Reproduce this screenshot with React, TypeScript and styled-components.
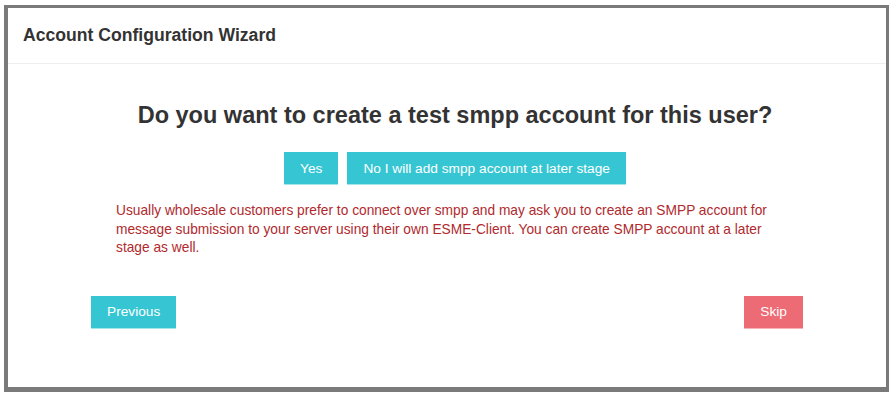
import React from "react";
import styled, { createGlobalStyle } from "styled-components";

const Global = createGlobalStyle`
  html, body { margin: 0; padding: 0; background: #ffffff; }
  body { font-family: "Liberation Sans", Arial, sans-serif; }
`;

const Frame = styled.div`
  margin: 5px 0 0 4px;
  width: 878px;
  height: 379px;
  background: #ffffff;
  border-style: solid;
  border-color: #7a7a7a;
  border-width: 3px 3px 5px 4px;
  display: flex;
  flex-direction: column;
`;

const Header = styled.div`
  height: 56px;
  box-sizing: border-box;
  padding: 0 15px;
  display: flex;
  align-items: center;
  border-bottom: 1px solid #eeeeee;
`;

const Title = styled.h4`
  margin: 0;
  font-size: 17.6px;
  font-weight: bold;
  color: #333333;
`;

const Body = styled.div`
  padding: 36px 0 0 16px;
  display: flex;
  flex-direction: column;
  align-items: center;
`;

const Question = styled.h3`
  margin: 0;
  font-size: 23.5px;
  font-weight: bold;
  color: #333333;
  line-height: 30px;
`;

const Choices = styled.div`
  display: flex;
  gap: 9px;
  margin-top: 22px;
`;

const Btn = styled.button<{ $tone: "teal" | "red" }>`
  height: 33px;
  padding: 0 16px;
  border: none;
  border-bottom: 1px solid ${(p) => (p.$tone === "teal" ? "#a5e6ec" : "#f5b3b8")};
  background: ${(p) => (p.$tone === "teal" ? "#36c6d3" : "#ed6b75")};
  color: #ffffff;
  font-family: "Liberation Sans", Arial, sans-serif;
  font-size: 13.7px;
  cursor: pointer;
`;

const Note = styled.p`
  margin: 17px 0 0;
  width: 678px;
  font-size: 13.75px;
  line-height: 18.5px;
  color: #b02a2e;
`;

const Footer = styled.div`
  display: flex;
  justify-content: space-between;
  padding: 0 83px;
  margin-top: 38px;
`;

export default function App() {
  return (
    <>
      <Global />
      <Frame>
        <Header>
          <Title>Account Configuration Wizard</Title>
        </Header>
        <Body>
          <Question>Do you want to create a test smpp account for this user?</Question>
          <Choices>
            <Btn $tone="teal">Yes</Btn>
            <Btn $tone="teal">No I will add smpp account at later stage</Btn>
          </Choices>
          <Note>
            Usually wholesale customers prefer to connect over smpp and may ask you to create an SMPP account for
            message submission to your server using their own ESME-Client. You can create SMPP account at a later
            stage as well.
          </Note>
        </Body>
        <Footer>
          <Btn $tone="teal">Previous</Btn>
          <Btn $tone="red">Skip</Btn>
        </Footer>
      </Frame>
    </>
  );
}
